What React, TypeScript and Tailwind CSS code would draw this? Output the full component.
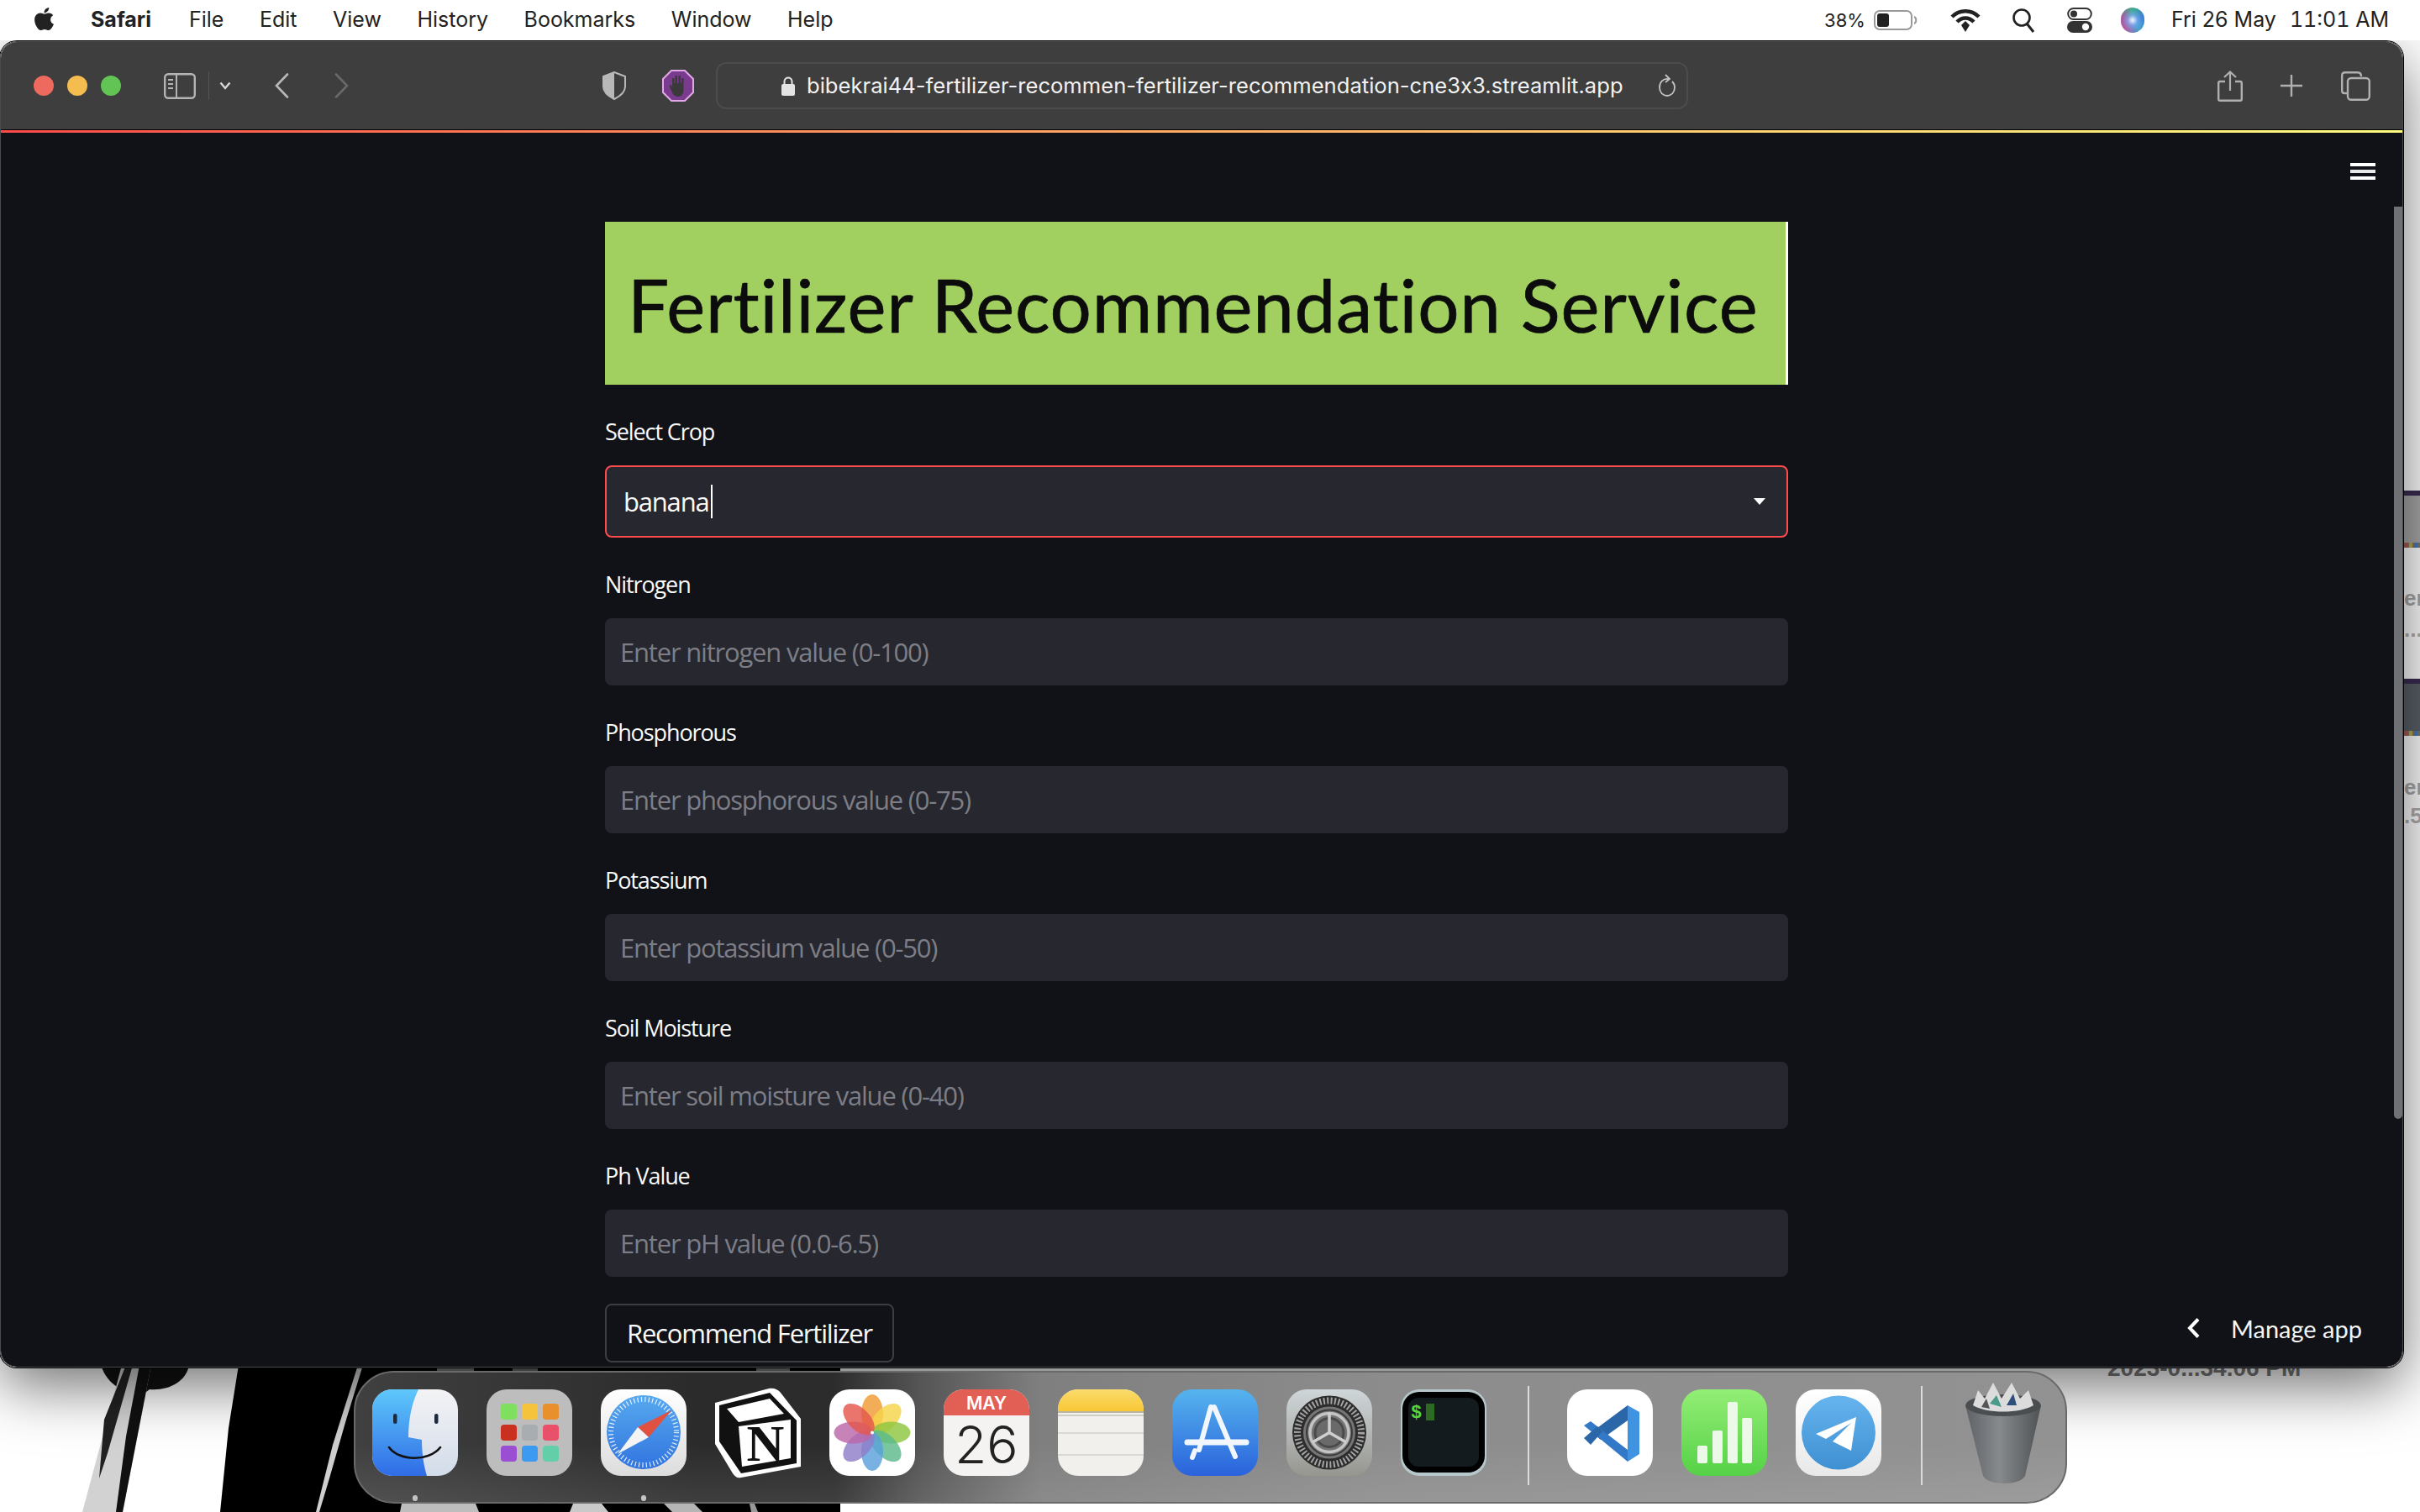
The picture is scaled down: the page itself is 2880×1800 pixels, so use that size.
import { FaApple } from "react-icons/fa";

const menuItems = ["File", "Edit", "View", "History", "Bookmarks", "Window", "Help"];

const fields = [
  { label: "Nitrogen", placeholder: "Enter nitrogen value (0-100)" },
  { label: "Phosphorous", placeholder: "Enter phosphorous value (0-75)" },
  { label: "Potassium", placeholder: "Enter potassium value (0-50)" },
  { label: "Soil Moisture", placeholder: "Enter soil moisture value (0-40)" },
  { label: "Ph Value", placeholder: "Enter pH value (0.0-6.5)" },
];

function Wallpaper() {
  return (
    <svg className="absolute inset-0" width="2880" height="1800" viewBox="0 0 2880 1800">
      <rect width="2880" height="1800" fill="#fff" />
      <path d="M120 1625 L225 1625 C222 1645 200 1656 178 1654 L170 1660 C150 1660 128 1650 120 1625Z" fill="#111" />
      <path d="M145 1625 L180 1625 L146 1800 L98 1800Z" fill="#d2d2d2" />
      <path d="M150 1625 L158 1625 L128 1730 L118 1760 L124 1690Z" fill="#222" />
      <path d="M166 1625 L180 1625 L146 1800 L138 1800 L150 1710Z" fill="#111" />
      <path d="M284 1625 L1000 1625 L1000 1800 L262 1800 L272 1700Z" fill="#000" />
      <path d="M426 1625 L432 1625 L412 1690 L392 1760 L380 1800 L376 1800 L396 1720Z" fill="#cfcfcf" />
      <path d="M478 1790 L566 1790 L570 1800 L476 1800Z" fill="#bdbdbd" />
      <path d="M682 1790 L716 1790 L724 1800 L678 1800Z" fill="#c9c9c9" />
      <path d="M790 1790 L826 1790 L836 1800 L800 1800Z" fill="#b5b5b5" />
      <path d="M892 1790 L898 1790 L902 1800 L894 1800Z" fill="#999" />
      <rect x="520" y="1628" width="44" height="4" fill="#777" />
      <rect x="610" y="1628" width="30" height="4" fill="#666" />
      <rect x="900" y="1628" width="40" height="4" fill="#777" />
    </svg>
  );
}

function DesktopPeek() {
  return (
    <>
      <div className="absolute left-[2861px] top-[584px] flex h-[68px] w-[19px] flex-col bg-[#a8a8a8] blur-[0.5px]">
        <div className="h-[6px] bg-[#3a2c52]" />
        <div className="flex-1" />
        <div className="flex h-[6px] gap-[2px] bg-[#777]">
          <div className="w-[4px] bg-[#b5544c]" />
          <div className="w-[4px] bg-[#c0a84a]" />
          <div className="w-[4px] bg-[#4b77b5]" />
        </div>
      </div>
      <div className="absolute left-[2861px] top-[808px] flex h-[68px] w-[19px] flex-col bg-[#5a6068] blur-[0.5px]">
        <div className="h-[6px] bg-[#3a2c52]" />
        <div className="flex-1" />
        <div className="flex h-[6px] gap-[2px] bg-[#777]">
          <div className="w-[4px] bg-[#b5544c]" />
          <div className="w-[4px] bg-[#c0a84a]" />
          <div className="w-[4px] bg-[#4b77b5]" />
        </div>
      </div>
      <span className="absolute left-[2861px] top-[697px] font-['Liberation_Sans'] text-[26px] leading-[30px] font-bold text-[#a8a8a8]">er</span>
      <span className="absolute left-[2861px] top-[734px] font-['Liberation_Sans'] text-[26px] leading-[30px] font-bold text-[#b0b0b0]">...</span>
      <span className="absolute left-[2861px] top-[922px] font-['Liberation_Sans'] text-[26px] leading-[30px] font-bold text-[#a8a8a8]">er</span>
      <span className="absolute left-[2861px] top-[956px] font-['Liberation_Sans'] text-[26px] leading-[30px] font-bold text-[#b0b0b0]">.5</span>
      <span className="absolute left-[2508px] top-[1613px] font-['Liberation_Sans'] text-[28px] leading-[32px] font-bold text-[#777]">2023-0...34.06 PM</span>
    </>
  );
}

function MenuBar() {
  return (
    <div className="relative z-10 flex h-[48px] items-center bg-white pr-[37px] pl-[37px] font-['Inter',sans-serif] text-[25px] text-[#222]">
      <FaApple className="mb-[3px] text-[#222]" size={31} />
      <span className="ml-[40px] font-bold">Safari</span>
      <div className="ml-[45px] flex gap-[42.5px]">
        {menuItems.map((m) => (
          <span key={m}>{m}</span>
        ))}
      </div>
      <div className="ml-auto flex items-center">
        <span className="text-[22px]">38%</span>
        <svg className="ml-[10px]" width="52" height="26" viewBox="0 0 52 26">
          <rect x="1" y="2" width="44" height="22" rx="6" fill="none" stroke="#999" strokeWidth="2" />
          <rect x="4" y="5" width="14" height="16" rx="3" fill="#222" />
          <path d="M48 9 C51 10 51 16 48 17" fill="none" stroke="#999" strokeWidth="2" />
        </svg>
        <svg className="ml-[38px]" width="38" height="30" viewBox="0 0 38 30">
          <path d="M3 11 C12 2 26 2 35 11" fill="none" stroke="#222" strokeWidth="4.5" />
          <path d="M9 17 C15 11 23 11 29 17" fill="none" stroke="#222" strokeWidth="4.5" />
          <path d="M14 21 L19 16 L24 21 L19 29Z" fill="#222" />
        </svg>
        <svg className="ml-[36px]" width="28" height="30" viewBox="0 0 28 30">
          <circle cx="12" cy="12" r="9.5" fill="none" stroke="#222" strokeWidth="2.6" />
          <path d="M18 19 L26 29" stroke="#222" strokeWidth="3" />
        </svg>
        <svg className="ml-[38px]" width="30" height="30" viewBox="0 0 30 30">
          <rect x="1.2" y="1" width="27.6" height="13" rx="6.5" fill="none" stroke="#333" strokeWidth="2" />
          <circle cx="8" cy="7.5" r="4" fill="#333" />
          <rect x="0" y="16" width="30" height="14" rx="7" fill="#333" />
          <circle cx="22" cy="23" r="4.2" fill="#fff" />
        </svg>
        <div className="ml-[34px] h-[30px] w-[28px] rounded-full bg-[radial-gradient(circle,#f4f6ff_0%,rgba(120,170,240,0.7)_30%,transparent_60%),conic-gradient(#3fae8f,#3b7fd8,#45a3cf,#b060a8,#a65a9c,#3fae8f)]" />
        <span className="ml-[32px]">Fri 26 May</span>
        <span className="ml-[16px] tabular-nums">11:01 AM</span>
      </div>
    </div>
  );
}

function Toolbar() {
  return (
    <div className="flex h-[105px] items-center border-b border-black bg-[#3e3e3e] pr-[38px] pl-[39px] font-['Inter',sans-serif]">
      <div className="flex gap-[16px]">
        <div className="h-[24px] w-[24px] rounded-full bg-[#ee6a5f]" />
        <div className="h-[24px] w-[24px] rounded-full bg-[#f5bd4f]" />
        <div className="h-[24px] w-[24px] rounded-full bg-[#61c454]" />
      </div>
      <svg className="ml-[51px]" width="38" height="31" viewBox="0 0 38 31">
        <rect x="1.2" y="1.2" width="35.6" height="28.6" rx="4" fill="none" stroke="#b4b4b4" strokeWidth="2.4" />
        <rect x="14" y="1" width="2" height="29" fill="#b4b4b4" />
        <rect x="5" y="7" width="6" height="2" fill="#b4b4b4" />
        <rect x="5" y="12" width="6" height="2" fill="#b4b4b4" />
        <rect x="5" y="17" width="6" height="2" fill="#b4b4b4" />
      </svg>
      <div className="ml-[15px] h-[34px] w-px bg-[#555]" />
      <svg className="ml-[12px]" width="14" height="10" viewBox="0 0 14 10">
        <path d="M1.5 1.5 L7 8 L12.5 1.5" fill="none" stroke="#d8d8d8" strokeWidth="2.4" />
      </svg>
      <svg className="ml-[51px]" width="18" height="30" viewBox="0 0 18 30">
        <path d="M16 1.5 L3 15 L16 28.5" fill="none" stroke="#b8b8b8" strokeWidth="2.6" strokeLinecap="round" />
      </svg>
      <svg className="ml-[54px]" width="18" height="30" viewBox="0 0 18 30">
        <path d="M2 1.5 L15 15 L2 28.5" fill="none" stroke="#696969" strokeWidth="2.6" strokeLinecap="round" />
      </svg>
      <svg className="ml-[300px]" width="30" height="34" viewBox="0 0 30 34">
        <path d="M15 1 L28 6 L28 18 C28 25 21 30 15 33 C9 30 2 25 2 18 L2 6Z" fill="none" stroke="#b8b8b8" strokeWidth="2" />
        <path d="M15 1 L2 6 L2 18 C2 25 9 30 15 33Z" fill="#b8b8b8" />
      </svg>
      <svg className="ml-[42px]" width="38" height="38" viewBox="0 0 38 38">
        <path d="M11 1 L27 1 L37 11 L37 27 L27 37 L11 37 L1 27 L1 11Z" fill="#7a3b8f" stroke="#e2a8e8" strokeWidth="2" />
        <path d="M12 17 L12 10 L14.5 10 L14.5 16 L15.5 16 L15.5 7 L18 7 L18 16 L19.5 16 L19.5 7 L22 7 L22 16 L23 16 L23 10 L25.5 10 L25.5 24 C25.5 29 23 32 19 32 C15 32 13 30 11 25 L8.5 19 L10.5 18 L12 21Z" fill="#3a3a3a" />
      </svg>
      <div className="ml-[26px] flex h-[56px] w-[1157px] items-center rounded-[12px] border-2 border-[#4c4c4c] pr-[12px] pl-[76px]">
        <svg width="16" height="23" viewBox="0 0 16 23">
          <rect x="0" y="9" width="16" height="14" rx="2" fill="#e4e4e4" />
          <path d="M3.5 10 L3.5 6 C3.5 0 12.5 0 12.5 6 L12.5 10" fill="none" stroke="#e4e4e4" strokeWidth="2" />
        </svg>
        <span className="ml-[14px] text-[25.6px] leading-none whitespace-nowrap text-[#f2f2f2] [font-feature-settings:'calt'_0]">
          bibekrai44-fertilizer-recommen-fertilizer-recommendation-cne3x3.streamlit.app
        </span>
        <svg className="ml-auto" width="22" height="28" viewBox="0 0 22 28">
          <path d="M13 6 C6 5 2 10 2 16 C2 22 6 26 11 26 C16 26 20 22 20 16 C20 13 19 11 17 9" fill="none" stroke="#c4c4c4" strokeWidth="1.8" />
          <path d="M9 1 L14 6 L9 10" fill="none" stroke="#c4c4c4" strokeWidth="1.8" />
        </svg>
      </div>
      <div className="ml-auto flex items-center">
        <svg width="30" height="37" viewBox="0 0 30 37">
          <path d="M9 13 L3 13 C2 13 1.2 14 1.2 15 L1.2 34 C1.2 35 2 35.8 3 35.8 L27 35.8 C28 35.8 28.8 35 28.8 34 L28.8 15 C28.8 14 28 13 27 13 L21 13" fill="none" stroke="#b0b0b0" strokeWidth="2.4" />
          <path d="M15 24 L15 2 M8 8 L15 1.5 L22 8" fill="none" stroke="#b0b0b0" strokeWidth="2.2" />
        </svg>
        <svg className="ml-[44px]" width="28" height="28" viewBox="0 0 28 28">
          <path d="M14 1 L14 27 M1 14 L27 14" stroke="#b0b0b0" strokeWidth="2.4" />
        </svg>
        <svg className="ml-[45px]" width="35" height="35" viewBox="0 0 35 35">
          <path d="M7 26 L4 26 C2 26 1.2 25 1.2 23 L1.2 5 C1.2 2.5 2.5 1.2 5 1.2 L20 1.2 C22.5 1.2 24 2.5 24 6" fill="none" stroke="#b0b0b0" strokeWidth="2.4" />
          <rect x="8" y="8" width="25.8" height="25.8" rx="4" fill="none" stroke="#b0b0b0" strokeWidth="2.4" />
        </svg>
      </div>
    </div>
  );
}

function Field({ label, placeholder }: { label: string; placeholder: string }) {
  return (
    <div className="flex flex-col gap-4">
      <label className="flex h-[48px] items-center text-[27px] tracking-[-1.1px] text-[#fafafa]">{label}</label>
      <input
        placeholder={placeholder}
        className="h-[80px] rounded-[8px] bg-[#26272f] px-[18px] text-[31px] tracking-[-1.2px] text-[#fafafa] outline-none placeholder:text-[#7d7e85]"
      />
    </div>
  );
}

function StreamlitPage() {
  return (
    <div className="relative flex min-h-0 flex-1 justify-center overflow-hidden bg-[#101217] pt-[106px] pr-[12px] font-['Open_Sans',sans-serif]">
      <div className="flex w-[1408px] flex-col gap-8">
        <div className="flex h-[194px] shrink-0 items-center border-r-[3px] border-white bg-[#a1d061] pt-[2px] pl-[27px] font-['Lato',sans-serif] text-[87px] leading-none tracking-[0.8px] whitespace-nowrap text-[#0c0c0c] [-webkit-text-stroke:0.7px_#0c0c0c]">
          Fertilizer Recommendation Service
        </div>
        <div className="flex flex-col gap-4">
          <label className="flex h-[48px] items-center text-[27px] tracking-[-1.1px] text-[#fafafa]">Select Crop</label>
          <div className="flex h-[86px] items-center rounded-[8px] border-2 border-[#ff4b4b] bg-[#26272f] pr-[25px] pl-[20px] text-[31px] tracking-[-1.2px] text-[#fafafa]">
            banana
            <div className="ml-[3px] h-[40px] w-[2px] bg-white" />
            <div className="ml-auto h-0 w-0 border-x-[7px] border-t-[8px] border-x-transparent border-t-white" />
          </div>
        </div>
        {fields.map((f) => (
          <Field key={f.label} label={f.label} placeholder={f.placeholder} />
        ))}
        <button className="h-[70px] w-[344px] shrink-0 rounded-[8px] border-2 border-[#3b3d45] bg-[#101217] text-[31px] tracking-[-1.2px] text-[#fafafa]">
          Recommend Fertilizer
        </button>
      </div>
      <div className="absolute top-[88px] right-0 bottom-[295px] w-[10px] rounded-b-[5px] bg-[#6f7175]" />
      <div className="absolute top-[36px] right-[32px] flex w-[30px] flex-col gap-1">
        <div className="h-1 bg-white" />
        <div className="h-1 bg-[#e8e8e8]" />
        <div className="h-1 bg-white" />
      </div>
      <div className="absolute right-[48px] bottom-[24px] flex items-center font-['Lato',sans-serif] text-[29px] text-[#f5f5f5]">
        <svg width="16" height="26" viewBox="0 0 16 26">
          <path d="M13 2.5 L3 13 L13 23.5" fill="none" stroke="#fff" strokeWidth="4" />
        </svg>
        <span className="ml-[36px]">Manage app</span>
      </div>
    </div>
  );
}

function Finder() {
  return (
    <svg width="102" height="103" viewBox="0 0 102 103">
      <defs>
        <linearGradient id="fb" x1="0" y1="0" x2="0" y2="1">
          <stop offset="0" stopColor="#5ec8fb" />
          <stop offset="1" stopColor="#2f6ce6" />
        </linearGradient>
        <linearGradient id="fw" x1="0" y1="0" x2="0" y2="1">
          <stop offset="0" stopColor="#f3f3f5" />
          <stop offset="1" stopColor="#d3dcea" />
        </linearGradient>
        <clipPath id="fc">
          <rect width="102" height="103" rx="24" />
        </clipPath>
      </defs>
      <g clipPath="url(#fc)">
        <rect width="102" height="103" fill="url(#fw)" />
        <path d="M0 0 L55 0 C47 16 43 36 43 57 L59 60 C59 75 61 90 65 103 L0 103Z" fill="url(#fb)" />
      </g>
      <rect x="25" y="29" width="4.5" height="12" rx="2.2" fill="#1c2a40" />
      <rect x="74" y="29" width="4.5" height="12" rx="2.2" fill="#1c2a40" />
      <path d="M20 69 C32 86 68 86 81 69" fill="none" stroke="#111" strokeWidth="2.6" strokeLinecap="round" />
    </svg>
  );
}

function Launchpad() {
  const squares = [
    [17, 17, "#7fe05f"], [42, 17, "#f5c33c"], [67, 17, "#e8902e"],
    [17, 42, "#c9301f"], [42, 42, "#a7adb0"], [67, 42, "#e9506a"],
    [17, 67, "#9a4fd3"], [42, 67, "#3c9af0"], [67, 67, "#62cfa9"],
  ] as const;
  return (
    <svg width="102" height="103" viewBox="0 0 102 103">
      <rect width="102" height="103" rx="24" fill="#bdbdbd" />
      {squares.map(([x, y, c]) => (
        <rect key={`${x}-${y}`} x={x} y={y} width="19" height="19" rx="4" fill={c} />
      ))}
    </svg>
  );
}

function Safari() {
  return (
    <svg width="102" height="103" viewBox="0 0 102 103">
      <defs>
        <linearGradient id="sb" x1="0" y1="0" x2="0" y2="1">
          <stop offset="0" stopColor="#57a9ef" />
          <stop offset="1" stopColor="#3174df" />
        </linearGradient>
        <linearGradient id="sw" x1="0" y1="0" x2="0" y2="1">
          <stop offset="0" stopColor="#ffffff" />
          <stop offset="1" stopColor="#dcdcdc" />
        </linearGradient>
      </defs>
      <rect width="102" height="103" rx="24" fill="url(#sw)" />
      <circle cx="51" cy="51" r="44" fill="url(#sb)" />
      <circle cx="51" cy="51" r="39" fill="none" stroke="#fff" strokeWidth="6" strokeDasharray="1.2 3.2" opacity="0.85" />
      <path d="M84 25 L44 45 L57 57Z" fill="#e0523f" />
      <path d="M20 77 L44 45 L57 57Z" fill="#f4f4f4" />
    </svg>
  );
}

function Notion() {
  return (
    <svg className="mt-[-2px]" width="102" height="108" viewBox="0 0 102 108">
      <path d="M0 18 L64 1 C70 0 75 2 78 6 L102 37 L102 94 L31 107 C26 108 24 106 21 102 L0 67Z" fill="#fff" />
      <path d="M5 21 L65 6 L97 39 L97 90 L31 102 L5 64Z" fill="#111" />
      <path d="M14 25 L65 13 L82 31 L28 41Z" fill="#fff" />
      <path d="M28 46 L90 38 L90 84 L32 94Z" fill="#fff" />
      <text x="60" y="87" textAnchor="middle" fontFamily="Liberation Serif, serif" fontWeight="700" fontSize="62" fill="#111">N</text>
    </svg>
  );
}

function Photos() {
  const petals = [
    ["#f09a33", 0], ["#f6d44a", 45], ["#8ec63f", 90], ["#5bb98b", 135],
    ["#5aa0dc", 180], ["#8f7cc8", 225], ["#bb66a8", 270], ["#e4574c", 315],
  ] as const;
  return (
    <svg width="102" height="103" viewBox="0 0 102 103">
      <rect width="102" height="103" rx="24" fill="#fff" />
      {petals.map(([c, a]) => (
        <ellipse key={a} cx="51" cy="29" rx="13" ry="23" fill={c} opacity="0.82" transform={`rotate(${a} 51 51.5)`} />
      ))}
      <circle cx="51" cy="51.5" r="2" fill="#fff" />
    </svg>
  );
}

function CalendarIcon() {
  return (
    <svg width="102" height="103" viewBox="0 0 102 103">
      <defs>
        <clipPath id="cc">
          <rect width="102" height="103" rx="24" />
        </clipPath>
      </defs>
      <g clipPath="url(#cc)">
        <rect width="102" height="103" fill="#f4f3f1" />
        <rect width="102" height="31" fill="#e25f56" />
      </g>
      <text x="51" y="24" textAnchor="middle" fontFamily="Inter, sans-serif" fontWeight="600" fontSize="21" fill="#fff">MAY</text>
      <text x="51" y="88" textAnchor="middle" fontFamily="Inter, sans-serif" fontWeight="300" fontSize="62" fill="#222">26</text>
    </svg>
  );
}

function Notes() {
  return (
    <svg width="102" height="103" viewBox="0 0 102 103">
      <defs>
        <linearGradient id="ny" x1="0" y1="0" x2="0" y2="1">
          <stop offset="0" stopColor="#fbdc6c" />
          <stop offset="1" stopColor="#f8c736" />
        </linearGradient>
        <clipPath id="nc">
          <rect width="102" height="103" rx="24" />
        </clipPath>
      </defs>
      <g clipPath="url(#nc)">
        <rect width="102" height="103" fill="#f1f0ec" />
        <rect width="102" height="26" fill="url(#ny)" />
        <rect y="26" width="102" height="2" fill="#b9b3a0" />
        <rect y="30" width="102" height="2" fill="#cfcdc6" strokeDasharray="2 2" />
        <rect y="51" width="102" height="2" fill="#dad8d3" />
        <rect y="77" width="102" height="2" fill="#dad8d3" />
      </g>
    </svg>
  );
}

function AppStore() {
  return (
    <svg width="102" height="103" viewBox="0 0 102 103">
      <defs>
        <linearGradient id="ab" x1="0" y1="0" x2="0" y2="1">
          <stop offset="0" stopColor="#55b4ee" />
          <stop offset="1" stopColor="#2a62dc" />
        </linearGradient>
      </defs>
      <rect width="102" height="103" rx="24" fill="url(#ab)" />
      <g stroke="#f2f6fd" strokeLinecap="round" fill="none">
        <path d="M46 21 L32 72" strokeWidth="6" />
        <path d="M50 21 L75 80" strokeWidth="6" />
        <path d="M18 63 L88 63" strokeWidth="7" />
        <path d="M27 73 L24 81" strokeWidth="6" />
      </g>
    </svg>
  );
}

function SystemPrefs() {
  return (
    <svg width="102" height="103" viewBox="0 0 102 103">
      <defs>
        <linearGradient id="pb" x1="0" y1="0" x2="0" y2="1">
          <stop offset="0" stopColor="#cfd6d9" />
          <stop offset="1" stopColor="#96968f" />
        </linearGradient>
      </defs>
      <rect width="102" height="103" rx="24" fill="url(#pb)" />
      <circle cx="51" cy="51.5" r="44" fill="#2d2d2d" />
      <circle cx="51" cy="51.5" r="38" fill="none" stroke="#a4a4a4" strokeWidth="8" strokeDasharray="2 2.4" />
      <circle cx="51" cy="51.5" r="31" fill="#757575" />
      <circle cx="51" cy="51.5" r="27" fill="none" stroke="#3a3a3a" strokeWidth="2" />
      <circle cx="51" cy="51.5" r="23" fill="none" stroke="#c4c4c4" strokeWidth="3.5" />
      <circle cx="51" cy="51.5" r="17" fill="#6a6a6a" stroke="#4a4a4a" strokeWidth="3" />
      <path d="M51 51.5 L51 28 M51 51.5 L31 63 M51 51.5 L71 63" stroke="#cfcfcf" strokeWidth="3.5" />
    </svg>
  );
}

function Terminal() {
  return (
    <svg width="102" height="103" viewBox="0 0 102 103">
      <rect width="102" height="103" rx="22" fill="#b7c8cc" />
      <rect x="2" y="3" width="98" height="96" rx="20" fill="#000" />
      <rect x="9" y="10" width="84" height="82" rx="12" fill="#141b1e" />
      <text x="12" y="34" fontFamily="Liberation Mono, monospace" fontSize="22" fontWeight="700" fill="#58d43f">$</text>
      <rect x="30" y="17" width="10" height="20" fill="#2f6a22" />
    </svg>
  );
}

function VSCode() {
  return (
    <svg width="102" height="103" viewBox="0 0 102 103">
      <rect width="102" height="103" rx="24" fill="#fff" />
      <path d="M72 19 L86 27 L86 77 L72 86Z" fill="#3f93e0" />
      <path d="M72 19 L72 37 L40 60 L29 51Z" fill="#2a66a8" />
      <path d="M20 43 L28 38 L72 72 L72 86 L60 76Z" fill="#3478c8" />
      <path d="M20 58 L36 44 L42 50 L28 66Z" fill="#2a66a8" />
    </svg>
  );
}

function Numbers() {
  return (
    <svg width="102" height="103" viewBox="0 0 102 103">
      <defs>
        <linearGradient id="gb" x1="0" y1="0" x2="0" y2="1">
          <stop offset="0" stopColor="#93ee75" />
          <stop offset="1" stopColor="#55d147" />
        </linearGradient>
      </defs>
      <rect width="102" height="103" rx="24" fill="url(#gb)" />
      <rect x="19" y="67" width="12" height="21" rx="2" fill="#edf9e8" />
      <rect x="37" y="49" width="12" height="39" rx="2" fill="#edf9e8" />
      <rect x="55" y="15" width="12" height="73" rx="2" fill="#edf9e8" />
      <rect x="72" y="34" width="12" height="54" rx="2" fill="#edf9e8" />
    </svg>
  );
}

function Telegram() {
  return (
    <svg width="102" height="103" viewBox="0 0 102 103">
      <defs>
        <linearGradient id="tb" x1="0" y1="0" x2="0" y2="1">
          <stop offset="0" stopColor="#66b4ef" />
          <stop offset="1" stopColor="#3f90d2" />
        </linearGradient>
        <linearGradient id="tw" x1="0" y1="0" x2="0" y2="1">
          <stop offset="0" stopColor="#fff" />
          <stop offset="1" stopColor="#e8e8e8" />
        </linearGradient>
      </defs>
      <rect width="102" height="103" rx="24" fill="url(#tw)" />
      <circle cx="51" cy="51.5" r="44" fill="url(#tb)" />
      <path d="M72 33 L24 53 L36 59 L66 40 L44 62 L66 73Z" fill="#fff" strokeLinejoin="round" />
    </svg>
  );
}

function Trash() {
  return (
    <svg width="92" height="124" viewBox="0 0 92 124">
      <defs>
        <linearGradient id="tr" x1="0" y1="0" x2="1" y2="0">
          <stop offset="0" stopColor="#5e6266" />
          <stop offset="0.45" stopColor="#878a8d" />
          <stop offset="1" stopColor="#4e5255" />
        </linearGradient>
      </defs>
      <path d="M1 30 C20 42 72 42 91 30 L72 114 C66 126 28 126 22 114Z" fill="url(#tr)" />
      <ellipse cx="46" cy="30" rx="45" ry="13" fill="#4a4e51" />
      <path d="M10 30 L16 12 L24 22 L34 3 L44 22 L56 3 L66 22 L76 12 L82 30 C66 40 26 40 10 30Z" fill="#dcdcdc" />
      <path d="M30 28 L38 18 L44 32Z" fill="#4b9a8a" />
      <path d="M50 30 L58 16 L62 30Z" fill="#2e4f7c" />
      <path d="M20 32 L26 22 L30 34Z" fill="#555" />
    </svg>
  );
}

function DockSeparator() {
  return <div className="h-[118px] w-[2px] self-center bg-[#dcdcdc]" />;
}

function Dock() {
  return (
    <div className="absolute top-[1632px] left-[421px] flex h-[158px] w-[2039px] rounded-[48px] border-2 border-[#6a6a6a] bg-[linear-gradient(180deg,transparent_55%,rgba(255,255,255,0.09)),linear-gradient(90deg,#404040_0%,#2b2b2b_20%,#2c2c2c_28%,#555555_33%,#7f7f7f_40%,#8c8c8c_60%,#929292_100%)] pt-[20px] pl-[20px]">
      <div className="relative flex items-start gap-[34px]">
        <Finder />
        <Launchpad />
        <Safari />
        <Notion />
        <Photos />
        <CalendarIcon />
        <Notes />
        <AppStore />
        <SystemPrefs />
        <Terminal />
        <div className="mt-[-4px] mr-[11px] ml-[15px] flex h-[118px]">
          <DockSeparator />
        </div>
        <VSCode />
        <Numbers />
        <Telegram />
        <div className="mx-[13px] mt-[-4px] flex h-[118px]">
          <DockSeparator />
        </div>
        <div className="mt-[-11px] ml-[3px]">
          <Trash />
        </div>
        <div className="absolute top-[126px] left-[48px] h-[7px] w-[6px] rounded-full bg-[#c4c4c4]" />
        <div className="absolute top-[126px] left-[320px] h-[7px] w-[6px] rounded-full bg-[#c4c4c4]" />
      </div>
    </div>
  );
}

export default function App() {
  return (
    <div className="relative h-[1800px] w-[2880px] overflow-hidden bg-white">
      <Wallpaper />
      <DesktopPeek />
      <MenuBar />
      <div className="relative mt-px flex h-[1579px] w-[2860px] flex-col overflow-hidden rounded-[20px] border border-[#4a4b4f] shadow-[0_0_0_1px_#000,0_22px_70px_rgba(0,0,0,0.56)]">
        <Toolbar />
        <div className="h-[3px] shrink-0 bg-linear-to-r from-[#ff4b4b] to-[#fffd80]" />
        <StreamlitPage />
      </div>
      <Dock />
    </div>
  );
}
